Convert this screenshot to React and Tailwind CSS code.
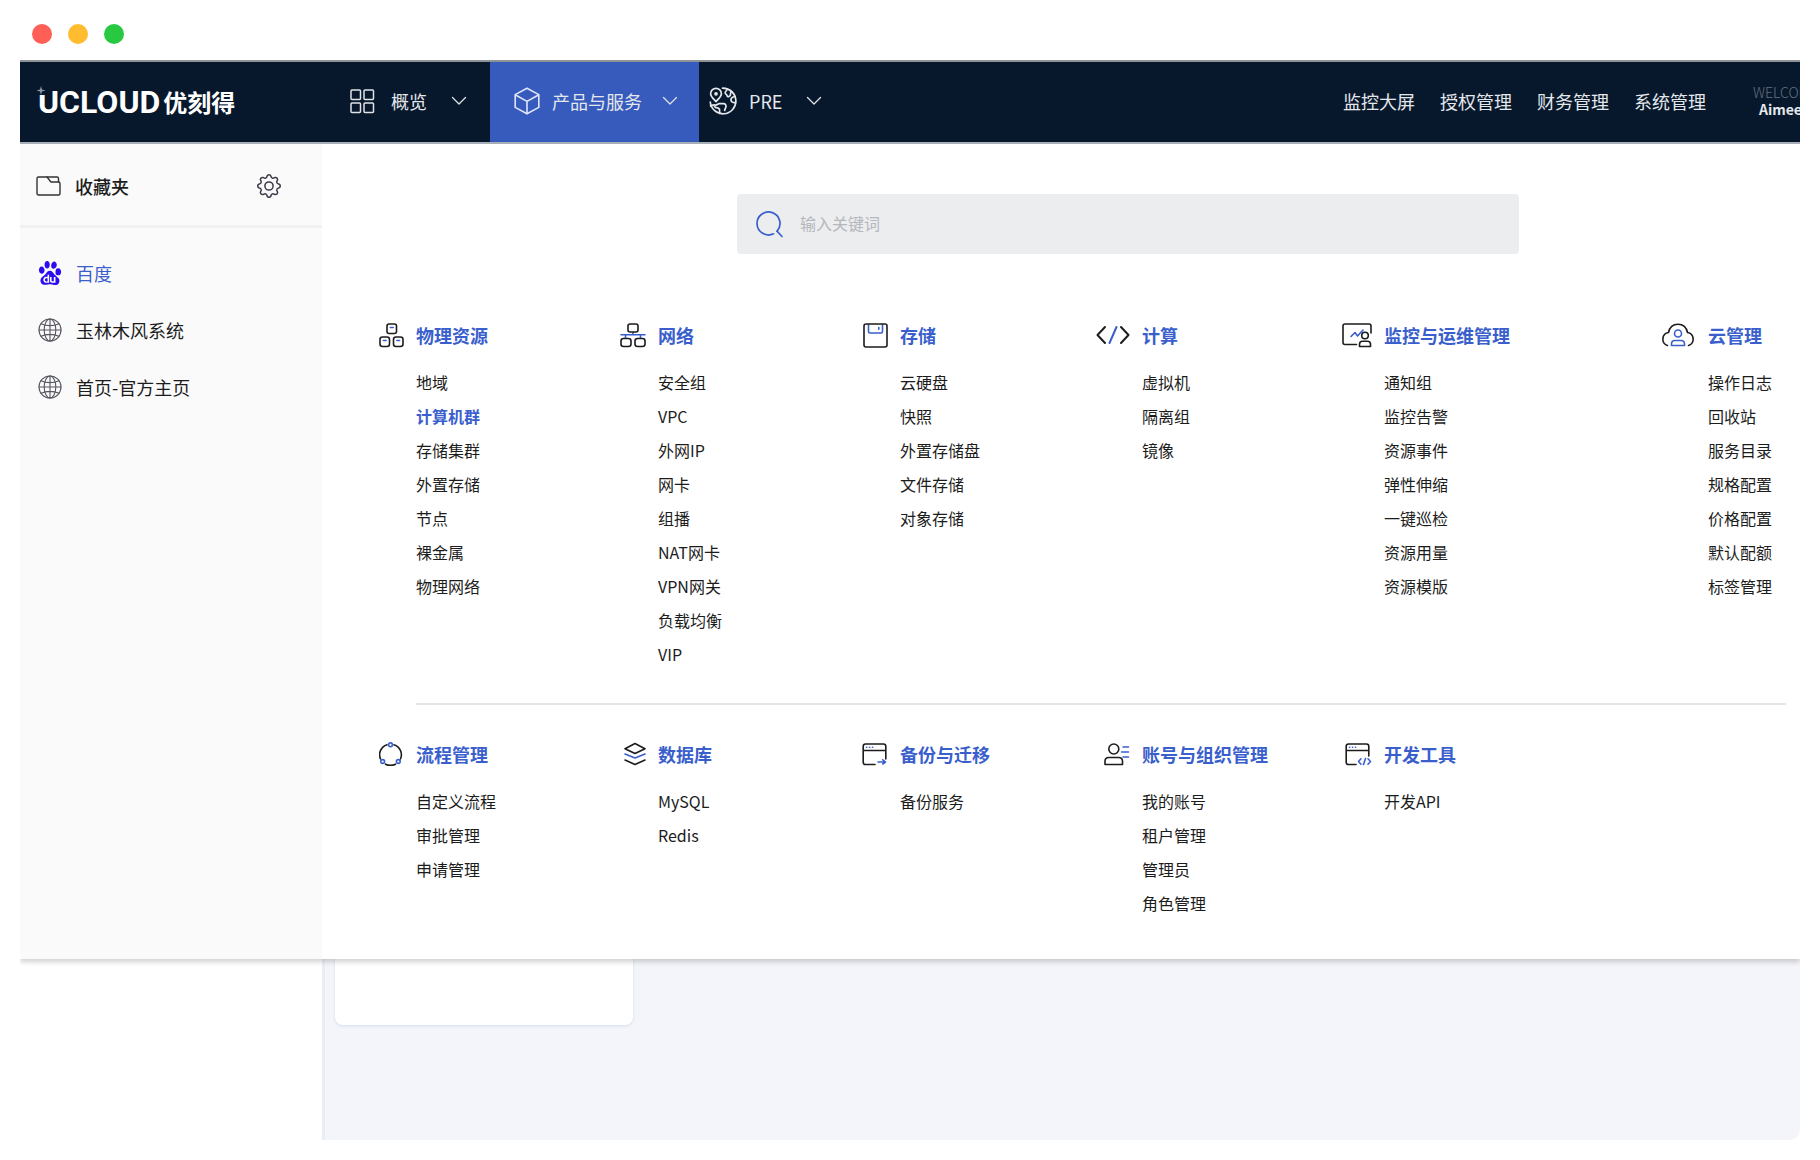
import { BsGear } from "react-icons/bs";
import { SiBaidu } from "react-icons/si";

const INK = "#1c1c1c";
const BLUE = "#3a5fcd";

/* ---------- Icons ---------- */

function Svg({ w = 24, h = 24, stroke = INK, width = 1.6, children }) {
  return (
    <svg
      width={w}
      height={h}
      viewBox={`0 0 ${w} ${h}`}
      fill="none"
      stroke={stroke}
      strokeWidth={width}
      strokeLinecap="round"
      strokeLinejoin="round"
      aria-hidden="true"
      className="shrink-0"
    >
      {children}
    </svg>
  );
}

const GridIcon = () => (
  <Svg w={25} h={25} stroke="#dfe3e8" width={1.5}>
    <rect x="1" y="1" width="9.5" height="9.5" rx="1" />
    <rect x="14" y="1" width="9.5" height="9.5" rx="1" />
    <rect x="1" y="14" width="9.5" height="9.5" rx="1" />
    <rect x="14" y="14" width="9.5" height="9.5" rx="1" />
  </Svg>
);

const CubeIcon = () => (
  <Svg w={26} h={28} stroke="#dfe6fa" width={1.6}>
    <path d="M13 1.2 24.8 7.6V20.4L13 26.8 1.2 20.4V7.6Z" />
    <path d="M1.6 8 13 14.4 24.4 8M13 14.4V26.5" />
  </Svg>
);

const EarthPinIcon = () => (
  <Svg w={28} h={28} stroke="#e4e7eb" width={1.7}>
    <path d="M13.5 1.2A12.8 12.800 0 1 1 1.300 15" />
    <path d="M7 14.6C4 11.4 1.6 9.4 1.6 6.7a5.4 5.4 0 0 1 10.8 0c0 2.7-2.4 4.7-5.4 7.9Z" />
    <circle cx="7" cy="6.8" r="1" />
    <path d="M1.500 19c2.200-.8 2.800-1.800 4.800-1 1.700.7 2.200-1.300 4-1.300h4.200c2 0 2.700 1.500 2.500 3-.2 1.800-1.500 2-1.300 3.800" />
    <path d="M5.500 19.500c1.500 2.200 3.800.8 4.800 2.500.8 1.500-.3 2.800.7 4.500" />
    <path d="M18.500 2.200c-.8 1.600-2.300 2-2.300 3.600 0 1.700 1.800 1.500 2 3 .2 1.700 2.600.7 3.200-.8.500-1.300-.4-2.500 1.100-3.500" />
    <path d="M25.800 9.500c-2.300.3-3.600 1.200-3.800 3-.2 2 1.200 3.300 4.500 3.300" />
  </Svg>
);

const Chevron = () => (
  <Svg w={16} h={10} stroke="#dfe3e8" width={1.3}>
    <path d="m1.5 1.500 6.500 6.500 6.500-6.500" />
  </Svg>
);

const FolderIcon = () => (
  <Svg w={25} h={20} stroke="#333" width={1.4}>
    <path d="M1 17.500v-15A1.500 1.500 0 0 1 2.500 1H11l4 5H22.500a1.500 1.500 0 0 1 1.500 1.500v10a1.500 1.500 0 0 1-1.500 1.500h-20A1.500 1.500 0 0 1 1 17.500Z" />
    <path d="M11 1h10a1.500 1.500 0 0 1 1.500 1.500V6" />
  </Svg>
);

const GlobeIcon = () => (
  <Svg w={24} h={24} stroke="#55565f" width={1.1}>
    <circle cx="12" cy="12" r="11" />
    <ellipse cx="12" cy="12" rx="5.8" ry="11" />
    <path d="M12 1v22M1 12h22M3.200 5.700C8 8.300 16 8.300 20.800 5.700M3.200 18.300C8 15.700 16 15.700 20.800 18.300" />
  </Svg>
);

const SearchIcon = () => (
  <Svg w={28} h={27} stroke={BLUE} width={1.7}>
    <path d="M17.500 22.800A11.500 11.500 0 1 1 21 20.200" />
    <path d="m21 20.200 5 5.300" />
  </Svg>
);

const PhysicalIcon = () => (
  <Svg w={25} h={25}>
    <rect x="8" y="1" width="9.5" height="9.5" rx="2" />
    <rect x="1" y="14" width="9.5" height="9.5" rx="2.5" />
    <rect x="14.500" y="14" width="9.5" height="9.5" rx="2.5" />
    <path stroke={BLUE} d="M11.400 4.500h2.800M4.300 17.500h2.800M17.800 17.500h2.800" />
  </Svg>
);

const NetworkIcon = () => (
  <Svg w={26} h={25}>
    <path stroke={BLUE} d="M1 11.800h24M13 9.500v2.300M5.500 12v3M20.500 12v3" />
    <rect x="8" y="1" width="10" height="8" rx="2" />
    <rect x="1" y="15.500" width="10" height="8" rx="2.500" />
    <rect x="15" y="15.500" width="10" height="8" rx="2.500" />
  </Svg>
);

const StorageIcon = () => (
  <Svg w={25} h={25}>
    <path stroke={BLUE} d="M5.500 1.500v7a1.500 1.500 0 0 0 1.500 1.500h11a1.500 1.500 0 0 0 1.500-1.500v-7M15.800 4.500v1.800" />
    <rect x="1" y="1" width="23" height="23" rx="2" />
  </Svg>
);

const CodeIcon = () => (
  <Svg w={34} h={20} width={2}>
    <path d="M9 2 1.500 10l7.500 8M25 2l7.500 8-7.500 8" />
    <path stroke={BLUE} d="M20.500 2 13.500 18" />
  </Svg>
);

const MonitorIcon = () => (
  <Svg w={30} h={25}>
    <path d="M14.500 21.500H3a2 2 0 0 1-2-2V3a2 2 0 0 1 2-2h24a2 2 0 0 1 2 2v7" />
    <path stroke={BLUE} d="m9 13.500 4-4 2.500 3.500 5.500-6" />
    <circle cx="23" cy="12.500" r="3.300" />
    <path d="M17.500 23.500v-2.200c0-2 1.300-3 3-3h5c1.700 0 3 1 3 3v2.200Z" />
  </Svg>
);

const CloudUserIcon = () => (
  <Svg w={36} h={24}>
    <path d="M7.500 22.500A6.700 6.700 0 0 1 8.500 9.500C9.500 4.500 13 1.200 18 1.200s8.500 3.300 9.500 8.300a6.700 6.700 0 0 1 1 13" />
    <g stroke={BLUE}>
      <circle cx="18" cy="10.500" r="3.500" />
      <path d="M11.500 22.500v-1.500c0-2.300 1.500-3.500 3.500-3.500h6c2 0 3.500 1.200 3.500 3.500v1.500Z" />
    </g>
  </Svg>
);

const FlowIcon = () => (
  <Svg w={25} h={24}>
    <path d="M8 2.800A10.500 10.500 0 0 0 1.500 17M15 2.800A10.500 10.500 0 0 1 21.500 17M6.500 22.200a12 12 0 0 0 10 0" />
    <g stroke={BLUE}>
      <circle cx="11.500" cy="2.800" r="1.900" />
      <circle cx="3.700" cy="19.500" r="1.900" />
      <circle cx="19.300" cy="19.500" r="1.900" />
    </g>
  </Svg>
);

const DatabaseIcon = () => (
  <Svg w={22} h={24}>
    <path d="M11 1.500 21 6.700 11 11.500 1 6.700Z" />
    <path stroke={BLUE} d="m1 12 10 4 10-4" />
    <path d="m1 18 10 4.500 10-4.500" />
  </Svg>
);

const BackupIcon = () => (
  <Svg w={26} h={23}>
    <path d="M13 21.500H3.500a2.300 2.300 0 0 1-2.300-2.300V3.300A2.300 2.300 0 0 1 3.500 1h18a2.300 2.300 0 0 1 2.300 2.300V16M1.200 7.500h22.600" />
    <path stroke={BLUE} d="M4.500 4.200h.2M7.500 4.200h.2M10.500 4.200h.2M16 19h7.500M20.800 16.800 23.500 19l-2.700 2" />
  </Svg>
);

const AccountIcon = () => (
  <Svg w={26} h={23}>
    <circle cx="9.800" cy="6" r="5" />
    <path d="M1 21.500v-3.300c0-2.500 1.500-3.700 3.800-3.700h9.900c2.300 0 3.800 1.200 3.800 3.700v3.300Z" />
    <path stroke={BLUE} d="M19 4h5.500M17.500 9h7M19 14h5.500" />
  </Svg>
);

const DevIcon = () => (
  <Svg w={27} h={23}>
    <path d="M11 21.500H3.500a2.300 2.300 0 0 1-2.300-2.300V3.300A2.300 2.300 0 0 1 3.500 1h18a2.300 2.300 0 0 1 2.300 2.300V13M1.200 7.500h22.600" />
    <g stroke={BLUE}>
      <path d="M4.500 4.200h.2M7.500 4.200h.2M10.500 4.200h.2" />
      <path d="m16 15.800-2.500 2.700 2.500 2.700M20.500 15.500 18.500 21.500M23 15.800l2.500 2.700-2.500 2.700" />
    </g>
  </Svg>
);

/* ---------- Data ---------- */

const TOP_LINKS = ["监控大屏", "授权管理", "财务管理", "系统管理"];

const FAVORITES = [
  { label: "百度", icon: <SiBaidu size={24} color="#2b0df0" />, active: true },
  { label: "玉林木风系统", icon: <GlobeIcon /> },
  { label: "首页-官方主页", icon: <GlobeIcon /> },
];

const PRIMARY = [
  { title: "物理资源", icon: <PhysicalIcon />, items: ["地域", "计算机群", "存储集群", "外置存储", "节点", "裸金属", "物理网络"] },
  { title: "网络", icon: <NetworkIcon />, items: ["安全组", "VPC", "外网IP", "网卡", "组播", "NAT网卡", "VPN网关", "负载均衡", "VIP"] },
  { title: "存储", icon: <StorageIcon />, items: ["云硬盘", "快照", "外置存储盘", "文件存储", "对象存储"] },
  { title: "计算", icon: <CodeIcon />, items: ["虚拟机", "隔离组", "镜像"] },
  { title: "监控与运维管理", icon: <MonitorIcon />, items: ["通知组", "监控告警", "资源事件", "弹性伸缩", "一键巡检", "资源用量", "资源模版"] },
  { title: "云管理", icon: <CloudUserIcon />, items: ["操作日志", "回收站", "服务目录", "规格配置", "价格配置", "默认配额", "标签管理"] },
];

const SECONDARY = [
  { title: "流程管理", icon: <FlowIcon />, items: ["自定义流程", "审批管理", "申请管理"] },
  { title: "数据库", icon: <DatabaseIcon />, items: ["MySQL", "Redis"] },
  { title: "备份与迁移", icon: <BackupIcon />, items: ["备份服务"] },
  { title: "账号与组织管理", icon: <AccountIcon />, items: ["我的账号", "租户管理", "管理员", "角色管理"] },
  { title: "开发工具", icon: <DevIcon />, items: ["开发API"] },
];

const ACTIVE_ITEM = "计算机群";

/* ---------- Pieces ---------- */

function Logo() {
  return (
    <a href="#" className="relative flex items-center gap-[3px] w-[312px] pl-[18px] shrink-0 text-white">
      <span className="font-['Roboto'] text-[32px] leading-8 font-bold">UCLOUD</span>
      <span className="text-2xl leading-8 font-bold">优刻得</span>
      <svg className="absolute left-4 top-0" width="10" height="9" viewBox="0 0 10 9" aria-hidden="true">
        <rect width="10" height="9" fill="#07182c" />
        <path d="M5 0 6 3.500 9.500 4.500 6 5.500 5 9 4 5.500 .5 4.500 4 3.500Z" fill="#8d97a3" />
      </svg>
    </a>
  );
}

function Header() {
  return (
    <header className="flex h-21 items-stretch overflow-hidden whitespace-nowrap bg-[#07182c] border-t-2 border-t-[#8f9395] border-b-2 border-b-[#a9b0ba] text-lg text-[#e4e7eb]">
      <div className="flex items-center shrink-0">
        <Logo />
      </div>
      <nav className="flex shrink-0">
        <button type="button" className="flex items-center w-[158px] pl-[18px] pb-0.5">
          <GridIcon />
          <span className="ml-4 mr-6">概览</span>
          <Chevron />
        </button>
        <button type="button" aria-expanded="true" className="flex items-center w-[209px] pl-6 pb-0.5 bg-[#375abd]">
          <CubeIcon />
          <span className="ml-3 mr-5">产品与服务</span>
          <Chevron />
        </button>
        <button type="button" className="flex items-center pl-[10px] pb-0.5">
          <EarthPinIcon />
          <span className="ml-3 mr-6">PRE</span>
          <Chevron />
        </button>
      </nav>
      <div className="ml-auto flex items-center gap-[25px] shrink-0 pb-0.5">
        {TOP_LINKS.map((label) => (
          <a key={label} href="#">{label}</a>
        ))}
        <div className="ml-[22px] w-[47px] overflow-hidden text-sm leading-[17px]">
          <p className="font-light text-[#66717f]">WELCOME</p>
          <p className="pl-[6px] font-bold">Aimee</p>
        </div>
      </div>
    </header>
  );
}

function Sidebar() {
  return (
    <aside className="w-[302px] shrink-0 bg-[#fafafa] text-lg text-[#1c1c1c]">
      <div className="flex items-center h-21 pl-4 pr-[41px] pt-[3px] border-b-3 border-[#f1f1f1]">
        <FolderIcon />
        <h2 className="ml-[14px] font-medium">收藏夹</h2>
        <button type="button" aria-label="设置" className="ml-auto text-[#3a3a48]">
          <BsGear size={24} />
        </button>
      </div>
      <ul className="pt-4">
        {FAVORITES.map(({ label, icon, active }) => (
          <li key={label}>
            <a
              href="#"
              className={`flex items-center gap-[14px] h-[57px] pl-[18px] ${active ? "text-[#3a5fcd]" : ""}`}
            >
              {icon}
              {label}
            </a>
          </li>
        ))}
      </ul>
    </aside>
  );
}

function Group({ title, icon, items }) {
  return (
    <section className="whitespace-nowrap">
      <div className="flex items-center gap-3">
        <span className="flex w-[34px] justify-end">{icon}</span>
        <h3 className="text-lg leading-8 font-bold text-[#3a5fcd]">{title}</h3>
      </div>
      <ul className="mt-[14px] pl-[46px] text-base leading-[34px] text-[#1c1c1c]">
        {items.map((item) => (
          <li key={item}>
            <a href="#" className={item === ACTIVE_ITEM ? "font-bold text-[#3a5fcd]" : ""}>
              {item}
            </a>
          </li>
        ))}
      </ul>
    </section>
  );
}

function GroupRow({ groups }) {
  return (
    <div className="grid grid-cols-[242fr_242fr_242fr_242fr_324fr_138fr] pl-12">
      {groups.map((g) => (
        <Group key={g.title} {...g} />
      ))}
    </div>
  );
}

function ProductMenu() {
  return (
    <div className="relative z-10 flex bg-white shadow-[0_3px_5px_rgba(0,0,0,0.18)]">
      <Sidebar />
      <div className="flex-1 min-w-0 pt-[50px] pb-[39px]">
        {/* Search */}
        <label className="flex items-center gap-4 h-15 ml-[415px] mr-[281px] pl-[19px] rounded-sm bg-[#ebedef]">
          <SearchIcon />
          <input
            type="text"
            aria-label="输入关键词"
            placeholder="输入关键词"
            className="flex-1 pb-0.5 bg-transparent text-base text-[#1c1c1c] placeholder-[#b4b7bb] outline-none"
          />
        </label>

        <div className="mt-[65px]">
          <GroupRow groups={PRIMARY} />
        </div>
        <hr className="mt-[32px] mb-[33px] ml-[94px] mr-[14px] border-t-2 border-[#e4e4e4]" />
        <GroupRow groups={SECONDARY} />
      </div>
    </div>
  );
}

export default function App() {
  return (
    <div className="flex flex-col min-h-screen px-5 pb-5 bg-white font-['Noto_Sans_CJK_SC',sans-serif]">
      {/* Window controls */}
      <div className="flex gap-4 pt-6 pl-3 h-15 shrink-0">
        <span className="size-5 rounded-full bg-[#ff5f57]" />
        <span className="size-5 rounded-full bg-[#febc2e]" />
        <span className="size-5 rounded-full bg-[#28c840]" />
      </div>

      <div className="flex flex-1 flex-col overflow-hidden rounded-b-[10px]">
        <Header />
        <ProductMenu />

        {/* Page behind the menu */}
        <div className="flex flex-1">
          <div className="w-[302px] shrink-0" />
          <main className="flex-1 pl-[10px] bg-[#f4f5fa] border-l-3 border-[#ebedf6]">
            <div className="w-[298px] h-[66px] rounded-b-lg bg-white shadow-[0_1px_3px_rgba(150,175,225,0.35)]" />
          </main>
        </div>
      </div>
    </div>
  );
}
